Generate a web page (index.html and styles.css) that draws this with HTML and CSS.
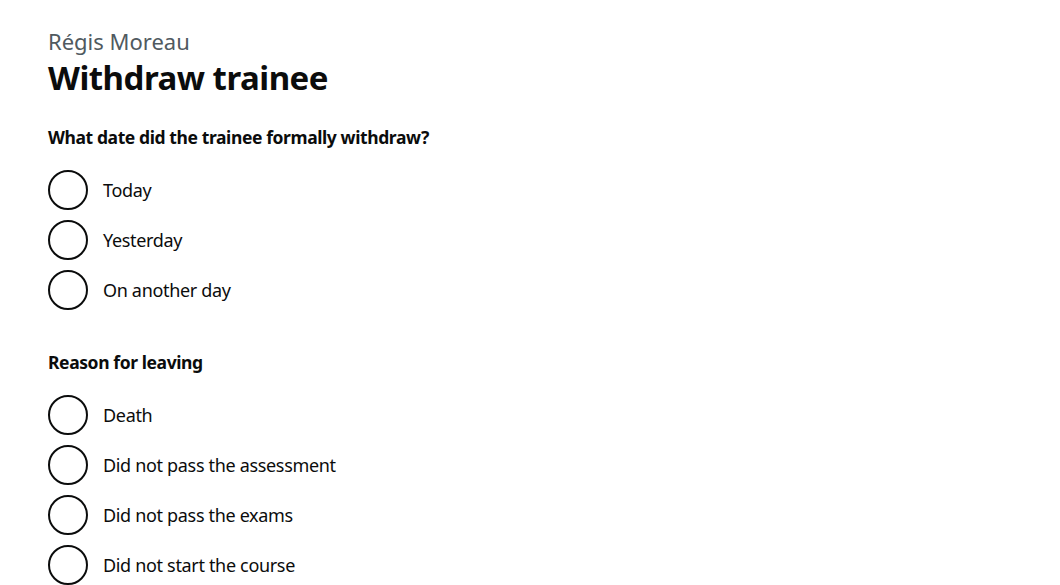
FILE: index.html
```html
<!DOCTYPE html>
<html lang="en">
<head>
<meta charset="utf-8">
<title>Withdraw trainee</title>
<link rel="stylesheet" href="styles.css">
</head>
<body>
<main class="page">
  <span class="caption">Régis Moreau</span>
  <h1 class="heading">Withdraw trainee</h1>

  <fieldset class="group">
    <legend class="legend">What date did the trainee formally withdraw?</legend>
    <div class="radios">
      <label class="radio"><span class="circle"></span><span class="label">Today</span></label>
      <label class="radio"><span class="circle"></span><span class="label">Yesterday</span></label>
      <label class="radio"><span class="circle"></span><span class="label">On another day</span></label>
    </div>
  </fieldset>

  <fieldset class="group">
    <legend class="legend">Reason for leaving</legend>
    <div class="radios">
      <label class="radio"><span class="circle"></span><span class="label">Death</span></label>
      <label class="radio"><span class="circle"></span><span class="label">Did not pass the assessment</span></label>
      <label class="radio"><span class="circle"></span><span class="label">Did not pass the exams</span></label>
      <label class="radio"><span class="circle"></span><span class="label">Did not start the course</span></label>
    </div>
  </fieldset>
</main>
</body>
</html>
```

FILE: styles.css
```css
html, body {
  margin: 0;
  padding: 0;
  background: #ffffff;
}
body {
  font-family: "Noto Sans", "Liberation Sans", sans-serif;
  color: #0b0c0c;
  overflow: hidden;
}
.page {
  padding: 26px 48px 0;
}
.caption {
  display: block;
  font-size: 22px;
  line-height: 30px;
  color: #505a5f;
}
.heading {
  margin: 0 0 25px;
  font-size: 33px;
  line-height: 44px;
  font-weight: 700;
  letter-spacing: -0.5px;
}
.group {
  border: 0;
  margin: 0 0 40px;
  padding: 0;
  min-width: 0;
}
.group:last-child {
  margin-bottom: 0;
}
.legend {
  padding: 0;
  margin-bottom: 20px;
  font-size: 17.5px;
  line-height: 25px;
  font-weight: 700;
  letter-spacing: -0.4px;
}
.radios {
  display: flex;
  flex-direction: column;
  gap: 10px;
}
.radio {
  display: flex;
  align-items: center;
  min-height: 40px;
  gap: 15px;
  font-size: 18px;
  letter-spacing: -0.33px;
}
.circle {
  box-sizing: border-box;
  width: 40px;
  height: 40px;
  border: 2px solid #0b0c0c;
  border-radius: 50%;
  flex: none;
}
.label {
  line-height: 25px;
}
```
